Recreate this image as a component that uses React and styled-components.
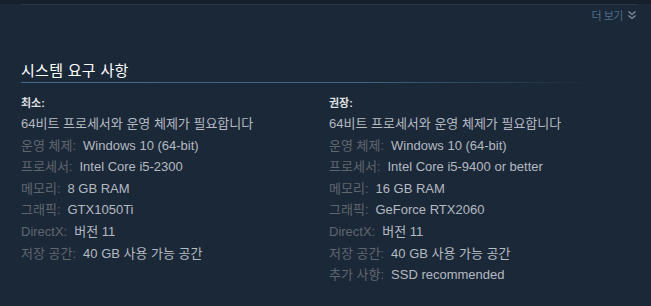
import React from "react";
import styled, { createGlobalStyle } from "styled-components";

const Global = createGlobalStyle`
  html, body { margin: 0; padding: 0; background: #1b2838; }
  body { font-family: "Liberation Sans", "Noto Sans CJK KR", sans-serif; }
  * { box-sizing: border-box; }
`;

const Page = styled.div`
  width: 651px;
  height: 306px;
  background: #1b2838;
  overflow: hidden;
  display: flex;
  flex-direction: column;
`;

const TopBand = styled.div`
  height: 4px;
  background: #161f2b;
`;

const Content = styled.div`
  padding: 0 14px 0 21px;
  display: flex;
  flex-direction: column;
`;

const TopRule = styled.div`
  height: 1px;
  background: #2b3a4b;
`;

const MoreRow = styled.div`
  display: flex;
  justify-content: flex-end;
  align-items: center;
  height: 20px;
  gap: 4px;
`;

const MoreText = styled.span`
  font-size: 11px;
  color: #4f6c8b;
  letter-spacing: -0.5px;
`;

const Heading = styled.h2`
  margin: 35px 0 0;
  font-size: 15px;
  line-height: 22px;
  font-weight: normal;
  color: #ffffff;
  letter-spacing: 0.3px;
  padding-bottom: 0;
  &::after {
    content: "";
    display: block;
    height: 1px;
    background: linear-gradient(to right, #3e6c89 0%, #3a6785 55%, rgba(59, 110, 140, 0) 93%);
  }
`;

const Columns = styled.div`
  display: grid;
  grid-template-columns: 308px 1fr;
  margin-top: 10px;
`;

const Col = styled.div`
  display: flex;
  flex-direction: column;
`;

const ColTitle = styled.div`
  font-size: 11px;
  line-height: 20px;
  font-weight: bold;
  color: #dcdedf;
`;

const List = styled.ul`
  list-style: none;
  margin: 0;
  padding: 0;
`;

const Item = styled.li`
  font-size: 13px;
  line-height: 21.6px;
  color: #b4bac0;
  white-space: nowrap;
`;

const Label = styled.span`
  color: #5f666e;
  margin-right: 7px;
`;

const Icon = () => (
  <svg width="10" height="10" viewBox="0 0 10 10" fill="none" stroke="#7f91a4" strokeWidth="1.3">
    <polyline points="1.5,1.5 5,4.5 8.5,1.5" />
    <polyline points="1.5,5.5 5,8.5 8.5,5.5" />
  </svg>
);

const minimum = [
  ["운영 체제:", "Windows 10 (64-bit)"],
  ["프로세서:", "Intel Core i5-2300"],
  ["메모리:", "8 GB RAM"],
  ["그래픽:", "GTX1050Ti"],
  ["DirectX:", "버전 11"],
  ["저장 공간:", "40 GB 사용 가능 공간"],
];

const recommended = [
  ["운영 체제:", "Windows 10 (64-bit)"],
  ["프로세서:", "Intel Core i5-9400 or better"],
  ["메모리:", "16 GB RAM"],
  ["그래픽:", "GeForce RTX2060"],
  ["DirectX:", "버전 11"],
  ["저장 공간:", "40 GB 사용 가능 공간"],
  ["추가 사항:", "SSD recommended"],
];

const ReqColumn = ({ title, rows }) => (
  <Col>
    <ColTitle>{title}</ColTitle>
    <List>
      <Item>64비트 프로세서와 운영 체제가 필요합니다</Item>
      {rows.map(([l, v]) => (
        <Item key={l}>
          <Label>{l}</Label>
          {v}
        </Item>
      ))}
    </List>
  </Col>
);

export default function App() {
  return (
    <>
      <Global />
      <Page>
        <TopBand />
        <Content>
          <TopRule />
          <MoreRow>
            <MoreText>더 보기</MoreText>
            <Icon />
          </MoreRow>
          <Heading>시스템 요구 사항</Heading>
          <Columns>
            <ReqColumn title="최소:" rows={minimum} />
            <ReqColumn title="권장:" rows={recommended} />
          </Columns>
        </Content>
      </Page>
    </>
  );
}
